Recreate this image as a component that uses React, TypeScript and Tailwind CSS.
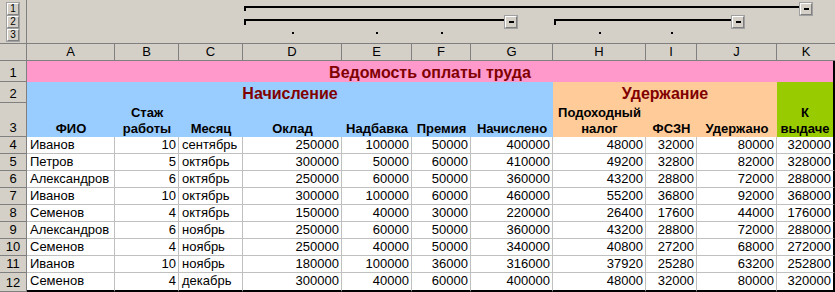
import { Fragment } from "react";

const cols = "grid grid-cols-[27px_88px_64px_64px_99px_70px_59px_82px_93px_51px_80px_58px]";

const rows: (string | number)[][] = [
    ["Иванов", 10, "сентябрь", 250000, 100000, 50000, 400000, 48000, 32000, 80000, 320000],
    ["Петров", 5, "октябрь", 300000, 50000, 60000, 410000, 49200, 32800, 82000, 328000],
    ["Александров", 6, "октябрь", 250000, 60000, 50000, 360000, 43200, 28800, 72000, 288000],
    ["Иванов", 10, "октябрь", 300000, 100000, 60000, 460000, 55200, 36800, 92000, 368000],
    ["Семенов", 4, "октябрь", 150000, 40000, 30000, 220000, 26400, 17600, 44000, 176000],
    ["Александров", 6, "ноябрь", 250000, 60000, 50000, 360000, 43200, 28800, 72000, 288000],
    ["Семенов", 4, "ноябрь", 250000, 40000, 50000, 340000, 40800, 27200, 68000, 272000],
    ["Иванов", 10, "ноябрь", 180000, 100000, 36000, 316000, 37920, 25280, 63200, 252800],
    ["Семенов", 4, "декабрь", 300000, 40000, 60000, 400000, 48000, 32000, 80000, 320000],
];

const letters = ["A", "B", "C", "D", "E", "F", "G", "H", "I", "J", "K"];

function Btn({ children }: { children?: React.ReactNode }) {
    return (
        <div className="w-[12px] h-[12px] shrink-0 flex items-center justify-center bg-[#d4d0c8] border border-t-white border-l-white border-r-[#808080] border-b-[#808080] outline outline-1 outline-[#a0a0a0] -outline-offset-0 text-[10px] leading-none text-black">
            {children}
        </div>
    );
}

function MinusBtn() {
    return (
        <Btn>
            <div className="w-[5px] h-[2px] bg-black" />
        </Btn>
    );
}

function Dot() {
    return (
        <div className="flex justify-center">
            <div className="mt-[3px] w-[2px] h-[2px] bg-black" />
        </div>
    );
}

function RowHead({ n, h }: { n: number; h: string }) {
    return (
        <div className={`${h} flex items-end justify-center bg-[#d4d0c8] border-r border-b border-[#808080] leading-[16px]`}>
            {n}
        </div>
    );
}

export default function App() {
    return (
        <div className="w-[835px] h-[292px] overflow-hidden bg-[#d4d0c8] text-[13px] text-black font-['Liberation_Sans',Arial,sans-serif]">
            {/* outline area */}
            <div className={`${cols} grid-rows-[15px_14px_14px] h-[44px] border-b border-[#808080]`}>
                <div className="row-span-3 flex flex-col gap-[1px] pt-[3px] pl-[7px] border-r border-[#808080]">
                    <Btn>1</Btn>
                    <Btn>2</Btn>
                    <Btn>3</Btn>
                </div>
                {/* level 1 */}
                <div className="col-start-5 col-span-7 row-start-1">
                    <div className="mt-[6px] ml-[1px] h-[5px] border-t-2 border-l-2 border-black" />
                </div>
                <div className="col-start-12 row-start-1 flex items-start">
                    <div className="mt-[6px] w-[23px] h-[2px] bg-black" />
                    <div className="mt-[3px]"><MinusBtn /></div>
                </div>
                {/* level 2 */}
                <div className="col-start-5 col-span-3 row-start-2">
                    <div className="mt-[4px] ml-[1px] h-[6px] border-t-2 border-l-2 border-black" />
                </div>
                <div className="col-start-8 row-start-2 flex items-start">
                    <div className="mt-[4px] w-[34px] h-[2px] bg-black" />
                    <div className="mt-[1px]"><MinusBtn /></div>
                </div>
                <div className="col-start-9 col-span-2 row-start-2">
                    <div className="mt-[4px] ml-[1px] h-[6px] border-t-2 border-l-2 border-black" />
                </div>
                <div className="col-start-11 row-start-2 flex items-start">
                    <div className="mt-[4px] w-[35px] h-[2px] bg-black" />
                    <div className="mt-[1px]"><MinusBtn /></div>
                </div>
                {/* level 3 */}
                <div className="col-start-5 row-start-3"><Dot /></div>
                <div className="col-start-6 row-start-3"><Dot /></div>
                <div className="col-start-7 row-start-3"><Dot /></div>
                <div className="col-start-9 row-start-3"><Dot /></div>
                <div className="col-start-10 row-start-3"><Dot /></div>
            </div>

            {/* column letters */}
            <div className={`${cols} h-[17px]`}>
                <div className="border-r border-b border-[#808080]" />
                {letters.map((l, i) => (
                    <div
                        key={l}
                        className={`text-center leading-[16px] border-b border-[#808080] ${i < 10 ? "border-r" : ""}`}
                    >
                        {l}
                    </div>
                ))}
            </div>

            {/* sheet */}
            <div className={cols}>
                <RowHead n={1} h="h-[21px]" />
                <div className="col-span-11 h-[21px] flex items-end justify-center bg-[#ff99cc] border-r-2 border-black text-[16px] leading-[18px] font-bold text-[#800000]">
                    Ведомость оплаты труда
                </div>

                <RowHead n={2} h="h-[21px]" />
                <div className="col-span-7 h-[21px] flex items-end justify-center bg-[#99ccff] text-[16px] leading-[18px] font-bold text-[#800000]">
                    Начисление
                </div>
                <div className="col-span-3 h-[21px] flex items-end justify-center bg-[#ffcc99] text-[16px] leading-[18px] font-bold text-[#800000]">
                    Удержание
                </div>
                <div className="row-span-2 flex flex-col items-center justify-end bg-[#99cc00] border-r-2 border-black font-bold leading-[16px]">
                    <span>К</span>
                    <span>выдаче</span>
                </div>

                <RowHead n={3} h="h-[34px]" />
                {[["ФИО"], ["Стаж", "работы"], ["Месяц"], ["Оклад"], ["Надбавка"], ["Премия"], ["Начислено"]].map((t, i) => (
                    <div key={i} className="h-[34px] flex flex-col items-center justify-end bg-[#99ccff] font-bold leading-[16px] whitespace-nowrap">
                        {t.map((s) => <span key={s}>{s}</span>)}
                    </div>
                ))}
                {[["Подоходный", "налог"], ["ФСЗН"], ["Удержано"]].map((t, i) => (
                    <div key={i} className="h-[34px] flex flex-col items-center justify-end bg-[#ffcc99] font-bold leading-[16px] whitespace-nowrap">
                        {t.map((s) => <span key={s}>{s}</span>)}
                    </div>
                ))}

                {rows.map((r, i) => {
                    const last = i === rows.length - 1;
                    return (
                        <Fragment key={i}>
                            <RowHead n={i + 4} h={last ? "h-[19px]" : "h-[17px]"} />
                            {r.map((v, j) => {
                                const align = typeof v === "number" ? "text-right" : "text-left";
                                const right = j === 10 ? "border-r-2 border-r-black" : "border-r border-r-[#c0c0c0]";
                                const bottom = last ? "h-[19px] border-b-2 border-b-black" : "h-[17px] border-b border-b-[#c0c0c0]";
                                return (
                                    <div key={j} className={`bg-white pl-[3px] pr-[2px] leading-[16px] whitespace-nowrap overflow-hidden ${align} ${right} ${bottom}`}>
                                        {v}
                                    </div>
                                );
                            })}
                        </Fragment>
                    );
                })}
            </div>
        </div>
    );
}
